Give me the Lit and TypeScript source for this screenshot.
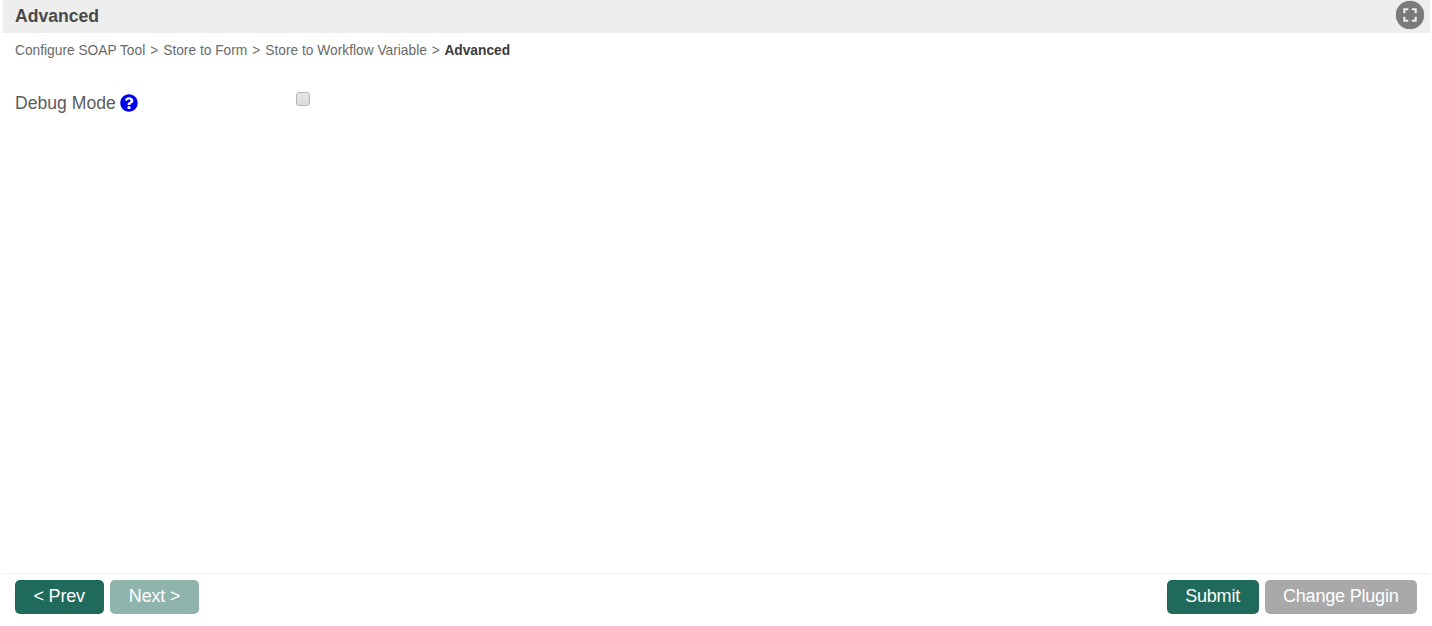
import { LitElement, html, css } from "lit";
import { customElement } from "lit/decorators.js";

@customElement("app-root")
export class AppRoot extends LitElement {
  static styles = css`
    :host {
      display: flex;
      flex-direction: column;
      height: 626px;
      padding: 0 2px 0 3px;
      box-sizing: border-box;
      background: #fff;
      font-family: "Liberation Sans", Arial, sans-serif;
      color: #555;
    }

    .header {
      height: 33px;
      flex: none;
      display: flex;
      align-items: center;
      justify-content: space-between;
      background: #eee;
      padding: 0 6px 0 12px;
    }

    .header h1 {
      margin: 0;
      font-size: 17.6px;
      font-weight: bold;
      color: #4a4a4a;
    }

    .expand {
      width: 28px;
      height: 28px;
      margin-top: -4px;
      border-radius: 50%;
      background: #7a7a7a;
      box-shadow: 0 0 1px #888;
      display: flex;
      align-items: center;
      justify-content: center;
    }

    .crumbs {
      display: flex;
      gap: 5px;
      padding: 10px 12px 0;
      height: 16px;
      font-size: 13.75px;
      line-height: 16px;
      color: #6a6a6a;
    }

    .crumbs strong {
      color: #3c3c3c;
      margin-left: -0.5px;
    }

    .body {
      flex: 1;
      padding: 0 12px;
    }

    .field {
      display: flex;
      margin-top: 34px;
    }

    .field label {
      width: 281px;
      font-size: 17.6px;
      line-height: 20px;
      color: #5c5c5c;
      display: flex;
      align-items: center;
      gap: 4px;
    }

    .help {
      width: 18px;
      height: 18px;
      fill: #0000f0;
    }

    .field input {
      appearance: none;
      margin: -1px 0 0;
      width: 14px;
      height: 14px;
      border: 1px solid #b5b5b5;
      border-radius: 3px;
      background: linear-gradient(#e6e6e6, #dcdcdc);
      box-sizing: border-box;
    }

    .footer {
      flex: none;
      height: 53px;
      box-sizing: border-box;
      border-top: 1px solid #eee;
      padding: 6px 13px 0 12px;
      display: flex;
      gap: 6px;
    }

    .spacer {
      flex: 1;
    }

    button {
      height: 34px;
      padding: 0 18.5px 2px;
      border: 0;
      border-radius: 5px;
      font-family: inherit;
      font-size: 18px;
      letter-spacing: -0.2px;
      color: #fff;
      background: #1f6a5b;
    }

    button.prev {
      padding-right: 19.5px;
    }

    button.disabled-teal {
      background: #8fb4ac;
    }

    button.grey {
      background: #a9a9a9;
    }
  `;

  render() {
    return html`
      <div class="header">
        <h1>Advanced</h1>
        <div class="expand">
          <svg width="14" height="14" viewBox="0 0 16 16" fill="none" stroke="#eee" stroke-width="2.4">
            <path d="M1.5 6V1.5H6M10 1.5h4.5V6M14.5 10v4.5H10M6 14.5H1.5V10" />
          </svg>
        </div>
      </div>
      <div class="crumbs">
        <span>Configure SOAP Tool</span><span>&gt;</span>
        <span>Store to Form</span><span>&gt;</span>
        <span>Store to Workflow Variable</span><span>&gt;</span>
        <strong>Advanced</strong>
      </div>
      <div class="body">
        <div class="field">
          <label>
            Debug Mode
            <svg class="help" viewBox="0 0 512 512">
              <path d="M504 256c0 136.997-111.043 248-248 248S8 392.997 8 256C8 119.083 119.043 8 256 8s248 111.083 248 248zM262.655 90c-54.497 0-89.255 22.957-116.549 63.758-3.536 5.286-2.353 12.415 2.715 16.258l34.699 26.31c5.205 3.947 12.621 3.008 16.665-2.122 17.864-22.658 30.113-35.797 57.303-35.797 20.429 0 45.698 13.148 45.698 32.958 0 14.976-12.363 22.667-32.534 33.976C247.128 238.528 216 254.941 216 296v4c0 6.627 5.373 12 12 12h56c6.627 0 12-5.373 12-12v-1.333c0-28.462 83.186-29.647 83.186-106.667 0-58.002-60.165-102-116.531-102zM256 338c-25.365 0-46 20.635-46 46 0 25.364 20.635 46 46 46s46-20.636 46-46c0-25.365-20.635-46-46-46z" />
            </svg>
          </label>
          <input type="checkbox" />
        </div>
      </div>
      <div class="footer">
        <button class="prev">&lt; Prev</button>
        <button class="disabled-teal">Next &gt;</button>
        <div class="spacer"></div>
        <button>Submit</button>
        <button class="grey">Change Plugin</button>
      </div>
    `;
  }
}

declare global {
  interface HTMLElementTagNameMap {
    "app-root": AppRoot;
  }
}
